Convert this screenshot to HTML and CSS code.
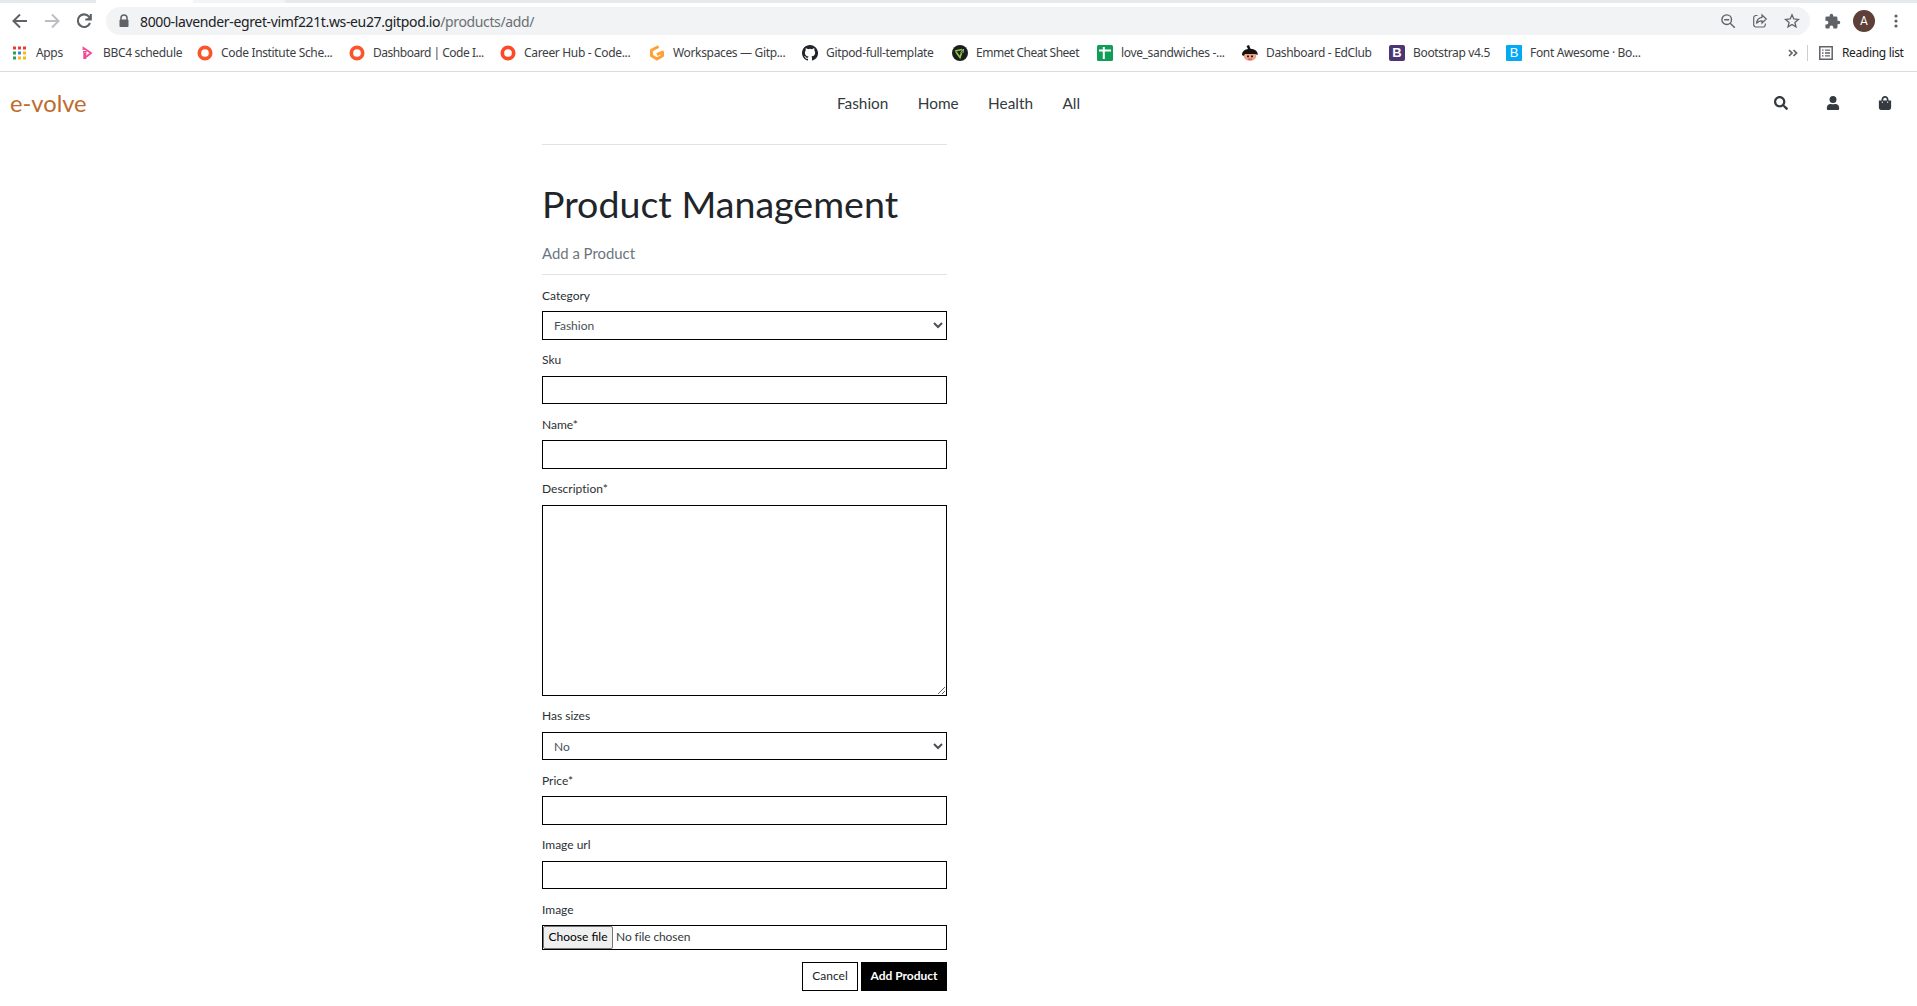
FILE: index.html
```html
<!DOCTYPE html>
<html lang="en">
<head>
<meta charset="utf-8">
<title>e-volve</title>
<link rel="stylesheet" href="styles.css">
</head>
<body>
<div class="browser">
  <div class="tabs"><i class="tab tab-before"></i><i class="tab tab-active"></i><i class="tab tab-hover"></i></div>
  <div class="toolbar">
    <div class="nav-buttons">
      <svg width="24" height="24" viewBox="0 0 24 24" fill="none" stroke="#5f6368" stroke-width="2"><path d="M19 12H6M12 5.500L5.500 12l6.500 6.500"/></svg>
      <svg width="24" height="24" viewBox="0 0 24 24" fill="none" stroke="#bcbec1" stroke-width="2"><path d="M5 12h13M12 5.500l6.500 6.500-6.500 6.500"/></svg>
      <svg width="24" height="24" viewBox="0 0 24 24" fill="none" stroke="#5f6368" stroke-width="2.100"><path d="M17.300 8A6.300 6.300 0 1 0 18 14M18.800 5v5.500h-5.500"/><path d="M18.800 6v4.500h-4.500z" fill="#5f6368" stroke="none"/></svg>
    </div>
    <div class="omnibox">
      <svg class="lock" width="12" height="14" viewBox="0 0 12 14"><path d="M3 6V4a3 3 0 0 1 6 0v2" fill="none" stroke="#5f6368" stroke-width="1.500"/><rect x="1.500" y="5.500" width="9" height="7.500" rx="1" fill="#5f6368"/></svg>
      <span class="url">8000-lavender-egret-vimf221t.ws-eu27.gitpod.io<span class="path">/products/add/</span></span>
      <div class="omni-icons">
        <svg width="16" height="16" viewBox="0 0 16 16" fill="none" stroke="#5f6368" stroke-width="1.400"><circle cx="6.700" cy="6.700" r="4.800"/><path d="M4.200 6.700h5M10.200 10.200l4.600 4.600"/></svg>
        <svg width="16" height="16" viewBox="0 0 16 16" fill="none" stroke="#5f6368" stroke-width="1.200"><path d="M5.500 2.500H4a2.300 2.300 0 0 0-2.300 2.300v7A2.300 2.300 0 0 0 4 14h7a2.300 2.300 0 0 0 2.300-2.300v-1.200"/><path d="M10 2l4.300 4L10 10V7.800C7.500 7.800 5.800 8.500 4.500 10.500 4.800 7 6.500 4.700 10 4.300z"/></svg>
        <svg width="16" height="16" viewBox="0 0 16 16" fill="none" stroke="#5f6368" stroke-width="1.300"><path d="M8 1.800l1.800 4.200 4.600.4-3.500 3 1.100 4.500L8 11.500l-4 2.400 1.100-4.500-3.500-3 4.600-.4z"/></svg>
      </div>
    </div>
    <svg class="puzzle" width="17" height="17" viewBox="0 0 24 24" fill="#5f6368"><path d="M20.500 11H19V7a2 2 0 0 0-2-2h-4V3.500a2.500 2.500 0 0 0-5 0V5H4a2 2 0 0 0-2 2v3.800h1.500a2.700 2.700 0 0 1 0 5.400H2V20c0 1.100.9 2 2 2h3.800v-1.500a2.700 2.700 0 0 1 5.400 0V22H17a2 2 0 0 0 2-2v-4h1.500a2.500 2.500 0 0 0 0-5z"/></svg>
    <span class="avatar">A</span>
    <svg class="dots" width="4" height="16" viewBox="0 0 4 16" fill="#5f6368"><circle cx="2" cy="3" r="1.600"/><circle cx="2" cy="8" r="1.600"/><circle cx="2" cy="13" r="1.600"/></svg>
  </div>
  <div class="bookmarks">
    <div class="list">
      <span class="bm"><svg viewBox="0 0 16 16"><path fill="#ea3b30" d="M1 1.500h3v3H1zM6 1.500h3v3H6zM11 1.500h3v3h-3z"/><path fill="#2f9e55" d="M1 6.500h3v3H1zM1 11.500h3v3H1z"/><path fill="#2e86ea" d="M6 6.500h3v3H6z"/><path fill="#fbb514" d="M11 6.500h3v3h-3zM6 11.500h3v3H6zM11 11.500h3v3h-3z"/></svg><b>Apps</b></span>
      <span class="bm"><svg viewBox="0 0 16 16" fill="none" stroke="#f54997" stroke-width="1.800"><path d="M4.500 5V3L12 8l-5 4M4 6.800h3.500" /><path d="M5.800 8v6" stroke-width="3"/></svg><b>BBC4 schedule</b></span>
      <span class="bm"><svg viewBox="0 0 16 16"><circle cx="8" cy="8" r="5.700" fill="#fff" stroke="#f9562e" stroke-width="3.700"/></svg><b>Code Institute Sche...</b></span>
      <span class="bm tight"><svg viewBox="0 0 16 16"><circle cx="8" cy="8" r="5.700" fill="#fff" stroke="#f9562e" stroke-width="3.700"/></svg><b>Dashboard | Code I...</b></span>
      <span class="bm"><svg viewBox="0 0 16 16"><circle cx="8" cy="8" r="5.700" fill="#fff" stroke="#fc4a28" stroke-width="3.700"/></svg><b>Career Hub - Code...</b></span>
      <span class="bm"><svg viewBox="0 0 16 16" fill="none" stroke="#ffa134" stroke-width="3" stroke-linejoin="round"><path d="M9.500 1.500L2.500 5.300v5.500L8 14l5.500-3.200V7L8 9.700"/></svg><b>Workspaces — Gitp...</b></span>
      <span class="bm"><svg viewBox="0 0 16 16" fill="#20252b"><path d="M8 0C3.580 0 0 3.580 0 8c0 3.540 2.290 6.530 5.470 7.590.4.070.55-.17.55-.38v-1.490c-2.230.48-2.700-.94-2.700-.94-.36-.93-.89-1.170-.89-1.170-.73-.5.050-.49.050-.49.810.060 1.240.83 1.240.83.72 1.230 1.880.88 2.340.67.070-.52.280-.88.510-1.080-1.780-.2-3.640-.89-3.640-3.950 0-.87.310-1.590.82-2.150-.08-.2-.36-1.020.08-2.120 0 0 .67-.21 2.200.82a7.600 7.600 0 0 1 4 0c1.530-1.040 2.200-.82 2.200-.82.440 1.100.16 1.920.08 2.120.51.560.82 1.270.82 2.150 0 3.070-1.870 3.750-3.650 3.950.29.250.54.730.54 1.480v2.190c0 .21.150.46.55.38A8 8 0 0 0 8 0"/></svg><b>Gitpod-full-template</b></span>
      <span class="bm tight"><svg viewBox="0 0 16 16"><circle cx="8" cy="8" r="8" fill="#1c1d1f"/><path d="M3 6l7-1.500M4 7l4 5.500 1.500-4.500" fill="none" stroke="#8cc83c" stroke-width="1.700"/><path d="M8.500 8l3-4-.5 4" fill="none" stroke="#a9bd96"/></svg><b>Emmet Cheat Sheet</b></span>
      <span class="bm"><svg viewBox="0 0 16 16"><rect width="16" height="16" rx="1.500" fill="#109d58"/><path d="M2 5.500h12M6.800 2v12" stroke="#fff" stroke-width="2"/></svg><b>love_sandwiches -...</b></span>
      <span class="bm"><svg viewBox="0 0 16 16"><ellipse cx="8" cy="11" rx="6.300" ry="5" fill="#eda48a"/><path d="M0 10C0 6 3 4.500 6 4L4.500 1 7 0l1.500 3.800C13 4 16 6.500 15.700 10L13 9H3L1.500 11z" fill="#17120f"/><path d="M5 10.500h2v1.800H5zM9 10.500h2v1.800H9z" fill="#351c18"/><path d="M6 14.200h4" stroke="#a55"/></svg><b>Dashboard - EdClub</b></span>
      <span class="bm"><span class="b-icon purple">B</span><b>Bootstrap v4.5</b></span>
      <span class="bm"><span class="b-icon blue">B</span><b>Font Awesome · Bo...</b></span>
    </div>
    <svg class="more" width="10" height="8" viewBox="0 0 10 8" fill="none" stroke="#5f6368" stroke-width="1.700"><path d="M1 1l3 3-3 3M5.500 1l3 3-3 3"/></svg>
    <i class="separator"></i>
    <svg class="reading-icon" width="14" height="14" viewBox="0 0 14 14"><path d="M.8.800h12.400v12.400H.8z" fill="none" stroke="#5f6368" stroke-width="1.500"/><path d="M3 4.200h1.500M6 4.200h5M3 7h1.500M6 7h5M3 9.800h1.500M6 9.800h5" stroke="#5f6368" stroke-width="1.300"/></svg>
    <span class="reading">Reading list</span>
  </div>
</div>

<header class="site-header">
  <a class="brand">e-volve</a>
  <nav><a>Fashion</a><a>Home</a><a>Health</a><a>All</a></nav>
  <div class="actions">
    <svg viewBox="0 0 512 512" fill="#343a40"><path d="M505 442.700L405.300 343c-4.500-4.500-10.600-7-17-7H372c27.600-35.300 44-79.700 44-128C416 93.100 322.900 0 208 0S0 93.100 0 208s93.100 208 208 208c48.300 0 92.700-16.400 128-44v16.300c0 6.400 2.500 12.500 7 17l99.700 99.700c9.400 9.400 24.600 9.400 33.900 0l28.300-28.300c9.400-9.400 9.400-24.600.1-34zM208 336c-70.700 0-128-57.200-128-128 0-70.700 57.200-128 128-128 70.700 0 128 57.200 128 128 0 70.700-57.200 128-128 128z"/></svg>
    <svg viewBox="-32 0 512 512" fill="#343a40"><path d="M224 256a128 128 0 1 0 0-256 128 128 0 0 0 0 256zm89.600 32h-16.700a174 174 0 0 1-145.800 0h-16.700C60.200 288 0 348.200 0 422.400V464c0 26.500 21.500 48 48 48h352c26.500 0 48-21.500 48-48v-41.600c0-74.200-60.200-134.400-134.400-134.400z"/></svg>
    <svg viewBox="-32 0 512 512" fill="#343a40"><path d="M352 160v-32C352 57.400 294.600 0 224 0S96 57.400 96 128v32H0v272c0 44.200 35.800 80 80 80h288c44.200 0 80-35.800 80-80V160h-96zm-192-32c0-35.300 28.700-64 64-64s64 28.700 64 64v32H160v-32zm160 120a24 24 0 1 1 0-48 24 24 0 0 1 0 48zm-192 0a24 24 0 1 1 0-48 24 24 0 0 1 0 48z"/></svg>
  </div>
</header>

<main class="product-form">
  <hr>
  <h1>Product Management</h1>
  <h2>Add a Product</h2>
  <hr>
  <form>
    <div class="field"><label>Category</label><select><option>Fashion</option></select></div>
    <div class="field"><label>Sku</label><input type="text"></div>
    <div class="field"><label>Name*</label><input type="text"></div>
    <div class="field"><label>Description*</label><textarea></textarea></div>
    <div class="field"><label>Has sizes</label><select><option>No</option></select></div>
    <div class="field"><label>Price*</label><input type="text"></div>
    <div class="field"><label>Image url</label><input type="text"></div>
    <div class="field"><label>Image</label><div class="file"><button type="button">Choose file</button><span>No file chosen</span></div></div>
    <div class="buttons"><a class="btn cancel">Cancel</a><button class="btn add" type="button">Add Product</button></div>
  </form>
</main>
</body>
</html>
```

FILE: styles.css
```css
* { box-sizing: border-box; }
body { margin: 0; height: 1006px; overflow: hidden; background: #fff; color: #212529; font-family: Lato, sans-serif; }
svg { display: block; flex: none; }

/* browser chrome */
.browser { height: 72px; border-bottom: 1px solid #d9dbdd; font-family: "Noto Sans", sans-serif; }
.tabs { display: flex; height: 3px; background: #e7eaed; }
.tab-before { width: 96px; }
.tab-active { width: 97px; background: #fff; }
.tab-hover { width: 92px; background: #f3f4f6; }
.toolbar { display: flex; align-items: center; height: 36px; padding-left: 8px; }
.nav-buttons { display: flex; gap: 8px; width: 98px; }
.omnibox { display: flex; align-items: center; width: 1704px; height: 28px; padding: 0 10px 0 12px; border-radius: 14px; background: #f1f3f4; }
.url { margin-left: 10px; font-size: 14px; letter-spacing: -.36px; color: #202124; white-space: nowrap; }
.path { color: #6b6f73; }
.omni-icons { display: flex; gap: 16px; margin-left: auto; }
.puzzle { margin-left: 14px; }
.avatar { width: 22px; height: 22px; margin-left: 12px; border-radius: 50%; background: #5d4037; color: #fff; font: 12px/22px Roboto, sans-serif; text-align: center; }
.dots { margin-left: 19px; }
.bookmarks { display: flex; align-items: center; height: 28px; font-size: 12px; color: #3c4043; white-space: nowrap; }
.list { display: grid; grid-template-columns: 67px 118px 152px 151px 149px 153px 150px 145px 145px 147px 117px 135px; width: 1641px; padding-left: 12px; }
.bm { display: flex; align-items: center; gap: 8px; }
.bm svg { width: 16px; height: 16px; }
.bm b { height: 18px; line-height: 17px; font-weight: 400; letter-spacing: -.34px; }
.tight b { letter-spacing: -.48px; }
.b-icon { flex: none; width: 16px; height: 16px; border-radius: 2px; color: #fff; font: 700 13px/16px "Liberation Sans", sans-serif; text-align: center; }
.purple { background: #4c3574; }
.blue { background: #03a9f4; font-weight: 400; border-radius: 1px; }
.more { margin-left: 147px; }
.separator { width: 1px; height: 16px; margin: 0 11px 0 9px; background: #ccced1; }
.reading { height: 18px; line-height: 17px; margin-left: 9px; letter-spacing: -.34px; color: #202124; }

/* site header */
.site-header { display: grid; grid-template-columns: 1fr auto 1fr; align-items: center; height: 64px; padding: 0 10px 2px; color: #343a40; }
.brand { font-size: 23.7px; line-height: 30px; color: #c06a2b; }
nav { display: flex; gap: 29.4px; font-size: 15.36px; line-height: 20px; }
.actions { display: flex; gap: 38px; justify-content: flex-end; padding-right: 15.5px; }
.actions svg { width: 14px; height: 14px; }

/* product form */
.product-form { width: 405px; margin: 8px 0 0 542px; }
hr { height: 1px; margin: 0; border: 0; background: #e2e2e3; }
h1 { margin: 36px 0 0; font-size: 37.6px; line-height: 46px; font-weight: 400; white-space: nowrap; }
h2 { margin: 16px 0 11px; font-size: 14.9px; line-height: 20px; font-weight: 400; color: #6c757d; }
form { padding-top: 10.6px; font-size: 12px; }
.field { margin-bottom: 10.4px; }
label { display: block; height: 25.6px; line-height: 20.8px; color: #2b3035; font-variant-ligatures: none; }
input, select, textarea { display: block; width: 100%; height: 28.5px; margin: 0; padding: 0 8px; border: 1px solid #000; border-radius: 0; background: #fff; color: #495057; font: 12px Lato, sans-serif; }
select { padding: 0 1px 0 7px; }
textarea { height: 191.2px; resize: vertical; }
.file { display: flex; align-items: center; gap: 3px; height: 25px; border: 1px solid #000; color: #343a40; }
.file span { padding-bottom: 2px; letter-spacing: -.1px; }
.file button { width: 70px; height: 23px; padding: 0 0 2px; border: 1px solid #767676; border-radius: 2px; background: #efefef; color: #000; font: 12px Lato, sans-serif; }
.buttons { display: flex; justify-content: flex-end; gap: 3px; padding-top: 1.200px; }
.btn { height: 29px; padding: 0; border: 1px solid #000; border-radius: 0; font: 12px/26px Lato, sans-serif; text-align: center; }
.cancel { width: 56px; color: #212529; }
.add { width: 86px; background: #000; color: #fff; font-weight: 700; }
```
